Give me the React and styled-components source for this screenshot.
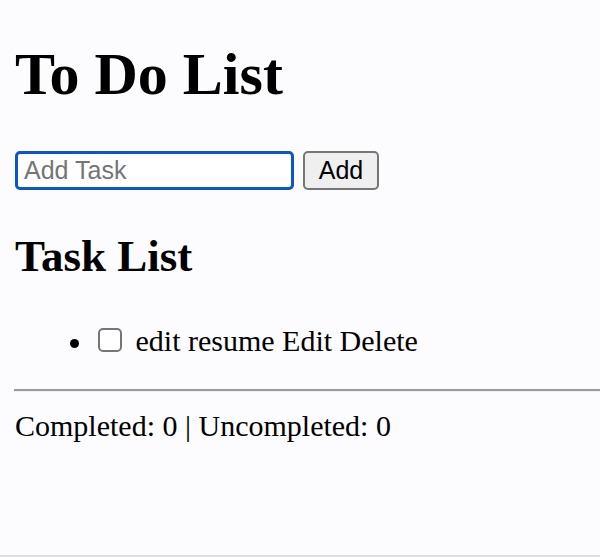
import React from "react";
import styled, { createGlobalStyle } from "styled-components";

const Global = createGlobalStyle`
  html, body { background: #fcfbfd; }
  body {
    margin: 0;
    font-family: "Liberation Serif", "Times New Roman", serif;
    font-size: 30px;
    color: #000;
    overflow: hidden;
  }
`;

const Page = styled.div`
  padding: 0 0 0 15px;
  height: 555px;
  border-bottom: 2px solid #dedde0;
  overflow: hidden;
`;

const Title = styled.h1`
  font-size: 60px;
  font-weight: bold;
  margin: 0;
  padding-top: 40px;
  margin-bottom: 42px;
  line-height: 69px;
`;

const Form = styled.div`
  display: flex;
  align-items: center;
  gap: 9px;
`;

const Input = styled.input`
  box-sizing: border-box;
  width: 279px;
  height: 39px;
  border: 3px solid #0b57c9;
  border-radius: 5px;
  padding: 0 6px;
  font-family: "Liberation Sans", Arial, sans-serif;
  font-size: 25px;
  background: #fff;
  outline: none;
  &::placeholder { color: #757575; }
`;

const Button = styled.button`
  box-sizing: border-box;
  height: 39px;
  width: 76px;
  padding: 0;
  border: 2px solid #767676;
  border-radius: 5px;
  background: #efefef;
  font-family: "Liberation Sans", Arial, sans-serif;
  font-size: 25px;
  color: #000;
`;

const Subtitle = styled.h2`
  font-size: 45px;
  font-weight: bold;
  margin: 40px 0 0;
  line-height: 52px;
`;

const List = styled.ul`
  margin: 42px 0 0;
  padding-left: 75px;
  line-height: 34px;
  list-style: none;
`;

const Item = styled.li`
  position: relative;
  &::before {
    content: "";
    position: absolute;
    left: -20px;
    top: 15px;
    width: 9px;
    height: 9px;
    border-radius: 50%;
    background: #000;
  }
`;

const Check = styled.input`
  box-sizing: border-box;
  appearance: none;
  width: 24px;
  height: 24px;
  margin: 0 6px 0 8px;
  border: 2px solid #767676;
  border-radius: 5px;
  background: #fff;
  vertical-align: -1px;
`;

const Rule = styled.hr`
  margin: 31px 0 0 -1px;
  border: none;
  border-top: 2px solid #9a9a9a;
  border-bottom: 1px solid #eeeeee;
  height: 0;
`;

const Stats = styled.p`
  margin: 17px 0 0;
  line-height: 34px;
`;

export default function App() {
  return (
    <>
      <Global />
      <Page>
        <Title>To Do List</Title>
        <Form>
          <Input type="text" placeholder="Add Task" />
          <Button>Add</Button>
        </Form>
        <Subtitle>Task List</Subtitle>
        <List>
          <Item>
            <Check type="checkbox" /> edit resume Edit Delete
          </Item>
        </List>
        <Rule />
        <Stats>Completed: 0 | Uncompleted: 0</Stats>
      </Page>
    </>
  );
}
